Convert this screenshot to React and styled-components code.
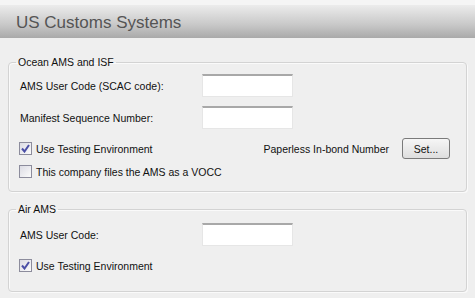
import React, { useState } from 'react';
import styled, { createGlobalStyle } from 'styled-components';

const GlobalStyle = createGlobalStyle`
  html, body {
    margin: 0;
    padding: 0;
    background: #efefef;
  }
  body {
    font-family: "Liberation Sans", Arial, sans-serif;
    font-size: 10.5px;
    color: #111;
  }
`;

const Check = ({ checked, onToggle, children }) => (
  <CheckRow onClick={onToggle}>
    <Box>
      {checked && (
        <svg width="9" height="9" viewBox="0 0 9 9">
          <path d="M1 4.5 L3.5 7.5 L8 1" fill="none" stroke="#4b4fa6" strokeWidth="2" />
        </svg>
      )}
    </Box>
    <span>{children}</span>
  </CheckRow>
);

const App = () => {
  const [oceanTest, setOceanTest] = useState(true);
  const [vocc, setVocc] = useState(false);
  const [airTest, setAirTest] = useState(true);

  return (
    <Page>
      <GlobalStyle />
      <Header>US Customs Systems</Header>

      <Group>
        <Legend>Ocean AMS and ISF</Legend>
        <FieldRow>
          <Label>AMS User Code (SCAC code):</Label>
          <Input />
        </FieldRow>
        <FieldRow>
          <Label>Manifest Sequence Number:</Label>
          <Input />
        </FieldRow>
        <CheckLine>
          <Check checked={oceanTest} onToggle={() => setOceanTest(!oceanTest)}>
            Use Testing Environment
          </Check>
          <Inbond>
            <span>Paperless In-bond Number</span>
            <Button>Set...</Button>
          </Inbond>
        </CheckLine>
        <CheckLine>
          <Check checked={vocc} onToggle={() => setVocc(!vocc)}>
            This company files the AMS as a VOCC
          </Check>
        </CheckLine>
      </Group>

      <Group air>
        <Legend>Air AMS</Legend>
        <FieldRow>
          <Label>AMS User Code:</Label>
          <Input />
        </FieldRow>
        <CheckLine>
          <Check checked={airTest} onToggle={() => setAirTest(!airTest)}>
            Use Testing Environment
          </Check>
        </CheckLine>
      </Group>
    </Page>
  );
};

export default App;

const Page = styled.div`
  width: 475px;
  height: 298px;
  padding-top: 5px;
  box-sizing: border-box;
  background: linear-gradient(#f5f5f5 0, #f5f5f5 5px, #efefef 5px);
`;

const Header = styled.div`
  height: 33px;
  display: flex;
  align-items: center;
  padding-left: 16px;
  padding-top: 3px;
  box-sizing: border-box;
  font-size: 17px;
  color: #555;
  background: linear-gradient(#ececec, #c8c8c8 60%, #a9a9a9);
`;

const Group = styled.fieldset`
  margin: ${props => (props.air ? '10px 8px 0' : '17px 8px 0')};
  padding: ${props => (props.air ? '7px 10px 15px' : '5px 10px 9px')};
  border: 1px solid #d3d3d3;
  border-radius: 4px;
  box-shadow: inset 1px 1px 0 #fafafa, 1px 1px 0 #fafafa;
  min-width: 0;
`;

const Legend = styled.legend`
  padding: 0 2px;
  margin-left: -3px;
  line-height: 14px;
  font-size: 10.5px;
  color: #111;
`;

const FieldRow = styled.div`
  display: grid;
  grid-template-columns: 183px 91px;
  align-items: center;
  height: 23px;
  margin-bottom: 9px;
`;

const Label = styled.span`
  padding-left: 1px;
`;

const Input = styled.input`
  box-sizing: border-box;
  width: 91px;
  height: 23px;
  border: 1px solid #e6e6e6;
  border-top: 2px solid #a8a8a8;
  background: #fff;
  outline: none;
`;

const CheckLine = styled.div`
  display: flex;
  align-items: center;
  justify-content: space-between;
  height: 21px;
  margin-top: 2px;

  &:first-of-type {
    margin-top: 0;
  }
`;

const CheckRow = styled.label`
  display: flex;
  align-items: center;
  gap: 4px;
  cursor: pointer;
`;

const Box = styled.span`
  width: 13px;
  height: 13px;
  box-sizing: border-box;
  border: 1px solid #8c8c9c;
  background: linear-gradient(135deg, #dcdce4, #fbfbfb);
  display: flex;
  align-items: center;
  justify-content: center;
`;

const Inbond = styled.div`
  display: flex;
  align-items: center;
  gap: 13px;
  margin-right: 6px;
`;

const Button = styled.button`
  width: 48px;
  height: 21px;
  border: 1px solid #7a7a7a;
  border-radius: 3px;
  background: linear-gradient(#f6f6f6, #dedede);
  font-family: inherit;
  font-size: 10.5px;
  color: #111;
  padding: 0;
`;
